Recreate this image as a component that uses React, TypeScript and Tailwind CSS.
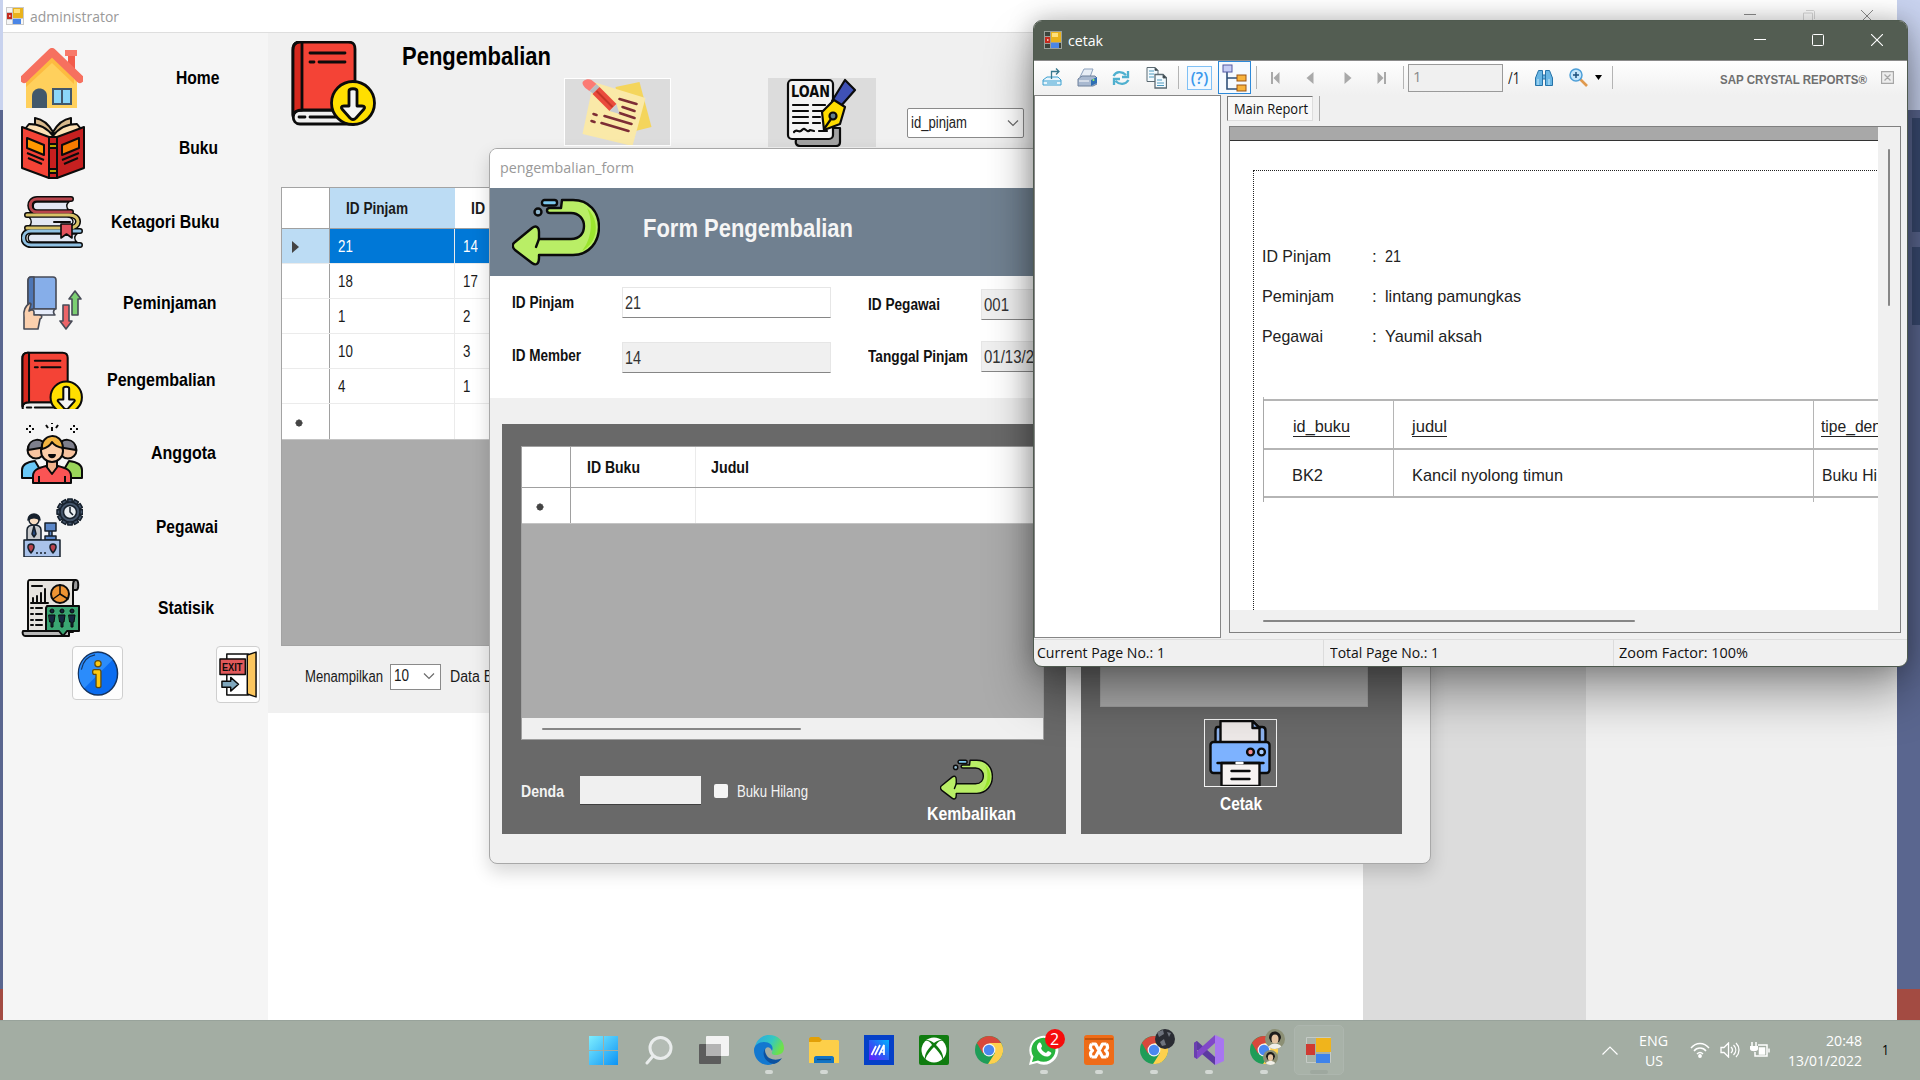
import React, { useLayoutEffect, useRef } from "react";

/* Single-line text condensed or widened to an exact pixel width. */
function Fit({ w, className = "", children }: { w: number; className?: string; children: React.ReactNode }) {
  const ref = useRef<HTMLSpanElement>(null);
  useLayoutEffect(() => {
    const el = ref.current;
    if (!el) return;
    el.style.transform = "none";
    const natural = el.getBoundingClientRect().width;
    if (natural > 0) el.style.transform = `scaleX(${w / natural})`;
  }, [w, children]);
  return (
    <span className={`block shrink-0 whitespace-nowrap ${className}`} style={{ width: w }}>
      <span ref={ref} className="inline-block origin-left">
        {children}
      </span>
    </span>
  );
}

const K = "#0b0b0b";

function FormsIcon({ className = "", dark = false }: { className?: string; dark?: boolean }) {
  const cell = dark ? "#3c443c" : "#f6f6f6";
  return (
    <svg viewBox="0 0 18 18" className={className}>
      <rect width="18" height="18" fill={dark ? "#9aa09a" : "#c9c9c9"} />
      <rect x="1" y="1" width="5" height="4" fill={cell} />
      <rect x="1" y="13" width="5" height="4" fill={cell} />
      <rect x="15" y="12" width="2" height="5" fill={cell} />
      <rect x="1" y="6" width="5" height="6" fill="#c42a1e" />
      <rect x="3" y="8" width="1.500" height="2" fill="#f6b5ae" />
      <rect x="7" y="1" width="10" height="10" fill="#e9b21c" />
      <rect x="8" y="2" width="6" height="4" fill="#ffe07a" />
      <rect x="7" y="12" width="8" height="5" fill="#4b86e6" />
    </svg>
  );
}

function HomeIcon() {
  return (
    <svg viewBox="0 0 62 60" className="h-[60px] w-[62px]">
      <path d="M44 2h12v6h-2v14h-7V8h-3z" fill="#f25c4c" />
      <path d="M44 2h12v6H44z" fill="#f8796a" />
      <path d="M5 31 31 6l25 25v29H5z" fill="#ffd05c" />
      <path d="M9 31 31 9l22 22v5L31 15 5 39v-8z" fill="#fdbb40" />
      <path d="M3 31 31 4l28 27" fill="none" stroke="#f6705f" strokeWidth="8" strokeLinecap="round" strokeLinejoin="round" />
      <path d="M11 60V48c0-10 15-10 15 0v12z" fill="#42586b" />
      <rect x="31" y="40" width="20" height="17" fill="#42586b" />
      <rect x="33" y="42" width="7" height="13" fill="#8bd6f8" />
      <rect x="42" y="42" width="7" height="13" fill="#8bd6f8" />
    </svg>
  );
}

function OpenBookIcon() {
  return (
    <svg viewBox="0 0 64 62" className="h-[62px] w-[64px]" stroke={K} strokeWidth="2" strokeLinejoin="round">
      <path d="M32 15C27 6 20 2 14 1v8L32 17 50 9V1c-6 1-13 5-18 14z" fill="#d8b98c" />
      <path d="M32 19C24 8 13 7 8 7L4 12l28 11 28-11-4-5c-5 0-16 1-24 12z" fill="#fde0b4" />
      <path d="M1 10l27 10v41L1 51z" fill="#f44336" />
      <path d="M63 10 36 20v41l27-10z" fill="#c62020" />
      <path d="M28 20h8v41h-8z" fill="#c81f1f" />
      <path d="M28 27h8v4h-8zM28 52h8v4h-8z" fill="#b8a400" />
      <path d="M6 21l17 7v10L6 31z" fill="#ff9800" />
      <path d="M58 21l-17 7v10l17-7z" fill="#f57c00" />
      <path d="M6 36l17 7M7 41l14 6M58 36l-17 7M57 41l-14 6" fill="none" />
    </svg>
  );
}

function BooksIcon() {
  return (
    <svg viewBox="0 0 62 52" className="h-[52px] w-[62px]" strokeLinecap="round" strokeLinejoin="round">
      <g stroke={K} strokeWidth="6" fill="none">
        <path d="M50 3H16c-9 0-9 13 0 13h34" />
        <path d="M6 19h42c12 0 12 13 0 13H6" />
        <path d="M59 35H10c-10 0-10 14 0 14h49" />
      </g>
      <path d="M16 6h32c-3 2-3 6 0 8H16c-5 0-5-8 0-8zM8 21h38c8 0 8 9 0 9H8c3-2 3-6 0-9zM11 38h45c-3 2-3 6 0 8H11c-5 0-5-8 0-8z" fill="#e2e7f3" stroke={K} strokeWidth="1.400" />
      <g strokeWidth="3" fill="none">
        <path d="M50 3H16c-9 0-9 13 0 13h34" stroke="#b8454c" />
        <path d="M6 19h42c12 0 12 13 0 13H6" stroke="#d8c268" />
        <path d="M59 35H10c-10 0-10 14 0 14h49" stroke="#8fc0e2" />
      </g>
      <path d="M33 26h16" stroke={K} strokeWidth="2" />
      <path d="M40 28h11v14l-5.500-4-5.500 4z" fill="#e2535e" stroke={K} strokeWidth="1.600" />
    </svg>
  );
}

function BorrowIcon() {
  return (
    <svg viewBox="0 0 62 54" className="h-[54px] w-[62px]" stroke="#474b57" strokeWidth="1.600" strokeLinejoin="round">
      <path d="M10 1h22c2 0 3 1 3 3v29H9l-2 4V5c0-3 1-4 3-4z" fill="#86aee9" />
      <path d="M10 1c-2 0-3 2-3 4v31l6-3V1z" fill="#4d76b5" />
      <path d="M34 33H12c-5 0-5 6 0 6h22c-2-2-2-4 0-6z" fill="#e6ecfa" />
      <path d="M3 53V41c-1-7 1-11 6-14l1 1-2 7c3-2 5-1 5 1v3h5c4 0 3 3 1 4l-2 10z" fill="#fbd0ae" />
      <path d="M54 15l6 8h-3v16h-6V23h-3z" fill="#7ccf72" />
      <path d="M45 53l-6-8h3V29h6v16h3z" fill="#ec6468" />
    </svg>
  );
}

function ReturnBookIcon({ className = "" }: { className?: string }) {
  return (
    <svg viewBox="0 0 85 85" className={className} stroke={K} strokeWidth="2.800" strokeLinejoin="round" strokeLinecap="round">
      <path d="M9 69h54v14H9c-9 0-9-14 0-14z" fill="#f0f0f0" />
      <path d="M9 1h48c5 0 7 2 7 7v61H9c-4 0-6 2-7 5V9c0-5 2-8 7-8z" fill="#f44336" />
      <path d="M9 1c-5 0-7 3-7 8v66c1-4 4-6 9-6V1z" fill="#d5281e" />
      <path d="M19 12h35M28 21h26M19 21h4M8 76h6M19 76h26" fill="none" />
      <circle cx="62" cy="62" r="21.500" fill="#ffdf00" />
      <path d="M58 50c0-3 8-3 8 0v15h5c3 0 3 2 2 3l-8 9c-2 2-4 2-6 0l-8-9c-1-1-1-3 2-3h5z" fill="#f4f4f4" />
    </svg>
  );
}

function MembersIcon() {
  return (
    <svg viewBox="0 0 62 62" className="h-[62px] w-[62px]" stroke={K} strokeWidth="2" strokeLinejoin="round">
      <path d="M5 7h2M11 7h2M9 3v2M9 9v2M25 3l2 3M31 1v1M31 5v4M37 3l-2 3M49 7h2M55 7h2M53 3v2M53 9v2" />
      <path d="M1 56V48c0-6 5-8 13-9l10 17z" fill="#69c8f7" />
      <path d="M61 56V48c0-6-5-8-13-9L38 56z" fill="#9bd65a" />
      <circle cx="15" cy="28" r="8.500" fill="#f9c4a0" />
      <circle cx="47" cy="28" r="8.500" fill="#f9c4a0" />
      <path d="M7 28c0-13 16-13 18-3zM55 28c0-13-16-13-18-3z" fill="#7e7f8c" />
      <path d="M26 38h10v10l-5 4-5-4z" fill="#f3b48c" />
      <circle cx="31" cy="29" r="11" fill="#fdcda7" />
      <path d="M21 27c-2-15 20-19 21-1-6-1-9-3-11-6-2 4-6 6-10 7z" fill="#f3b440" />
      <path d="M28 33c1 3 5 3 6 0z" fill={K} />
      <path d="M12 61V54c0-6 5-8 13-10l6 8 6-8c8 2 13 4 13 10v7z" fill="#fb5454" />
      <path d="M18 54v7M44 54v7" />
    </svg>
  );
}

function StaffIcon() {
  const teeth = Array.from({ length: 12 }, (_, i) => i * 30);
  return (
    <svg viewBox="0 0 62 59" className="h-[59px] w-[62px]" stroke="#16202c" strokeWidth="1.500" strokeLinejoin="round">
      {teeth.map((a) => (
        <rect key={a} x="46.800" y="1" width="4.400" height="5" fill="#44546a" transform={`rotate(${a} 49 14)`} />
      ))}
      <circle cx="49" cy="14" r="10" fill="#44546a" />
      <circle cx="49" cy="14" r="6.500" fill="#e8ecf0" />
      <path d="M49 9v5l3 3" fill="none" />
      <path d="M6 42V32c0-4 3-5 7-5s7 1 7 5v10z" fill="#c9cacc" />
      <circle cx="13" cy="22" r="5" fill="#f8dcc0" />
      <path d="M7 22c0-8 12-8 12 0-4-3-8-3-12 0z" fill="#16202c" />
      <path d="M13 28l2 8-2 3-2-3z" fill="#274a80" />
      <path d="M24 25h11v8H24zM28 33h3v5h-3zM24 38h11v4H24z" fill="#5b87c8" />
      <path d="M3 42h36v17H3z" fill="#a9c2ea" />
      <path d="M10 55c-5-6-3-9 0-9s5 3 0 9zM32 55c-5-6-3-9 0-9s5 3 0 9z" fill="#b6424c" />
      <path d="M15 55h12" strokeDasharray="2 2" />
    </svg>
  );
}

function StatsIcon() {
  return (
    <svg viewBox="0 0 62 58" className="h-[58px] w-[62px]" stroke={K} strokeWidth="2" strokeLinejoin="round" strokeLinecap="round">
      <path d="M52 1h3c3 0 3 10 0 10h-4z" fill="#9a9a9a" />
      <path d="M9 1h45c-2 1-2 3-2 6v46H7V4c0-2 0-3 2-3z" fill="#e6e3de" />
      <path d="M2 52h46v5H4c-2 0-3-3-2-5z" fill="#b8b8b8" />
      <path d="M11 7h10M12 24V19M16 24V17M20 24V14M24 24V10M10 24h17" fill="none" />
      <circle cx="39" cy="15" r="9" fill="#ee9433" />
      <path d="M39 6v9l-7 5M39 15l8 5" fill="none" strokeWidth="1.500" />
      <path d="M10 29h2M15 29h6M10 35h2M15 35h6M10 41h2M15 41h6M10 46h2M15 46h6" />
      <path d="M26 27h32v25H46l-4 5-4-5H25V29z" fill="#3aa572" />
      <g fill="#15263f" strokeWidth="1">
        {[31, 41, 51].map((x) => (
          <path key={x} d={`M${x - 2} 32a2 2 0 1 1 4 0a2 2 0 0 1-4 0M${x - 3} 36h6l-1 7h-1v5h-2v-5h-1z`} />
        ))}
      </g>
    </svg>
  );
}

function InfoIcon() {
  return (
    <svg viewBox="0 0 42 46" className="h-[45px] w-[42px]">
      <ellipse cx="21" cy="23" rx="20" ry="22" fill="#0a6cf0" stroke="#16345e" strokeWidth="1.500" />
      <path d="M7 38C-4 26 2 3 20 2c7 0 12 3 16 7z" fill="#2b8cfb" />
      <path d="M4 19C6 9 12 5 18 4" stroke="#16345e" fill="none" strokeWidth="1.200" />
      <g fill="#fdc90f" stroke="#5d4a10" strokeWidth="1.300" strokeLinejoin="round">
        <circle cx="21" cy="13" r="3.200" />
        <path d="M17 19h5c1 0 2 1 2 2v15c0 2-5 2-5 0V24h-2c-2 0-2-5 0-5z" />
      </g>
    </svg>
  );
}

function ExitIcon() {
  return (
    <svg viewBox="0 0 40 50" className="h-[49px] w-[39px]" stroke={K} strokeWidth="1.500" strokeLinejoin="round">
      <path d="M8 4h22v42H8z" fill="#fff" />
      <path d="M29 5l9-3v46l-9-3z" fill="#fbc65e" />
      <path d="M1 9h26v16H1z" fill="#e0585a" />
      <text x="3" y="21.500" fontFamily="Liberation Sans, sans-serif" fontWeight="bold" fontSize="12" textLength="21" lengthAdjust="spacingAndGlyphs" fill={K} stroke="none">EXIT</text>
      <path d="M3 32h9v-4l8 7-8 7v-4H3z" fill="#7fa7bd" />
    </svg>
  );
}

function NoteIcon() {
  return (
    <svg viewBox="0 0 104 66" className="h-full w-full">
      <path d="M50 8l24-5 12 45-28 7z" fill="#f4d55c" />
      <path d="M28 3l52 16-13 48-50-12z" fill="#fae9a8" />
      <path d="M54 20l17 5M57 28l12 4M54 34l15 5M39 37l27 8M36 44l27 8M28 35l3 1M26 42l3 1" stroke="#7d2d35" strokeWidth="2.600" strokeLinecap="round" />
      <path d="M17 4c0-3 6-5 9-3l5 4-7 7c-3-2-7-5-7-8z" fill="#fb7a74" />
      <path d="M31 5l-7 7 4 3 6-7z" fill="#b9bcc2" />
      <path d="M34 8l-7 7 17 17 7-7z" fill="#ea4b3c" />
      <path d="M31 12l16 16" stroke="#c43528" strokeWidth="2" />
      <path d="M51 25l-7 7 10 3z" fill="#c9ccd2" />
    </svg>
  );
}

function LoanIcon() {
  return (
    <svg viewBox="0 0 108 69" className="h-full w-full" stroke={K} strokeWidth="2.200" strokeLinejoin="round" strokeLinecap="round">
      <path d="M28 50h44v14c0 3-2 4-4 4H32c-3 0-5-2-4-6z" fill="#a2a2a2" />
      <rect x="20" y="2" width="45" height="59" rx="4" fill="#f4f4f4" />
      <text x="23" y="19" fontFamily="DejaVu Sans, sans-serif" fontWeight="bold" fontSize="15" textLength="39" lengthAdjust="spacingAndGlyphs" fill={K} stroke="none">LOAN</text>
      <path d="M25 27h15M45 27h12M25 33h15M45 33h10M25 39h15M45 39h7M25 45h15M45 45h7M26 54c3-4 5 2 8-2s5 4 8 0l4 1M51 53h8" fill="none" />
      <path d="M77 2l10 10-15 17-8-6z" fill="#3f51b5" />
      <path d="M66 22l11 7-5 17-16 6-2-18z" fill="#ffdd00" />
      <circle cx="65" cy="38" r="3.500" fill="#607d8b" />
      <path d="M63 41l-7 10" fill="none" />
    </svg>
  );
}

function ReturnArrow({ className = "" }: { className?: string }) {
  return (
    <svg viewBox="0 0 88 68" className={className} stroke={K} strokeWidth="2.400" strokeLinejoin="round" strokeLinecap="round">
      <path d="M50 2h11c16 0 26 12 26 27S77 57 61 57H27v3c0 6-3 8-7 5L3 52c-3-3-3-6 0-8l17-14c4-3 7-1 7 4v7h32c9 0 13-6 13-13s-5-13-13-13H38c-4 0-4-5 0-5h11z" fill="#b9ee66" />
      <path d="M75 10c13 12 12 34-5 43 9-11 12-29 5-43z" fill="#9be52e" stroke="none" />
      <path d="M27 41l-3 8" fill="none" />
      <rect x="30" y="2" width="15" height="5.500" rx="2.500" fill="#7cc8ee" />
      <circle cx="26" cy="14" r="3.500" fill="#8fb6cc" />
    </svg>
  );
}

function PrinterIcon() {
  return (
    <svg viewBox="0 0 70 66" className="h-full w-full" stroke={K} strokeWidth="2.400" strokeLinejoin="round" strokeLinecap="round">
      <path d="M13 7h-1c-2 0-2 2-2 4v12h50V11c0-2 0-4-3-4z" fill="#8cb2ee" />
      <path d="M15 1h32l7 7v15H15z" fill="#eee9e8" />
      <path d="M47 1v7h7z" fill="#8cb2ee" />
      <rect x="5" y="22" width="59" height="31" rx="3" fill="#7db2ff" />
      <path d="M16 43h38v23H16z" fill="#f6f2f1" />
      <path d="M12 43h46M26 51h18M26 59h18" fill="none" />
      <circle cx="45" cy="32" r="3.400" fill="#f28b93" />
      <circle cx="56" cy="32" r="3.400" fill="#a6ccff" />
      <path d="M31 43h6" stroke="#fff" />
    </svg>
  );
}

const menu: { label: string; w: number; x: number; gap: string; icon: React.ReactNode }[] = [
  { label: "Home", w: 43.5, x: 176, gap: "mt-[14px]", icon: <HomeIcon /> },
  { label: "Buku", w: 39, x: 178.5, gap: "mt-[8px]", icon: <OpenBookIcon /> },
  { label: "Ketagori Buku", w: 108.5, x: 110.5, gap: "mt-[12px]", icon: <BooksIcon /> },
  { label: "Peminjaman", w: 93.5, x: 123, gap: "mt-[19px]", icon: <BorrowIcon /> },
  { label: "Pengembalian", w: 108.5, x: 106.5, gap: "mt-[15px]", icon: (
    <span className="block h-[58px] w-[62px] overflow-hidden"><ReturnBookIcon className="h-[64px] w-[62px]" /></span>
  ) },
  { label: "Anggota", w: 65, x: 150.5, gap: "mt-[11px]", icon: <MembersIcon /> },
  { label: "Pegawai", w: 62, x: 155.5, gap: "mt-[12px]", icon: <StaffIcon /> },
  { label: "Statisik", w: 56, x: 158, gap: "mt-[19px]", icon: <StatsIcon /> },
];

function Sidebar() {
  return (
    <nav className="flex w-[265px] shrink-0 flex-col bg-[#f5f5f5]">
      {menu.map((m) => (
        <div key={m.label} className={`flex h-[62px] shrink-0 items-center pl-[18px] ${m.gap}`}>
          <div className="flex shrink-0 items-center" style={{ width: m.x - 21 }}>{m.icon}</div>
          <Fit w={m.w} className="text-[18.5px] leading-[24px] font-bold text-black">{m.label}</Fit>
        </div>
      ))}
      <div className="mt-[7px] flex items-start pl-[69px]">
        <div className="flex h-[54px] w-[51px] items-center justify-center rounded-[4px] border border-[#cfcfcf] bg-[#fdfdfd]"><InfoIcon /></div>
        <div className="ml-[93px] flex h-[57px] w-[44px] items-center justify-center rounded-[4px] border border-[#cfcfcf] bg-[#fdfdfd]"><ExitIcon /></div>
      </div>
    </nav>
  );
}

function Chevron() {
  return (
    <svg viewBox="0 0 12 8" className="h-[8px] w-[12px]"><path d="M1 1.500l5 5 5-5" fill="none" stroke="#6b6b6b" strokeWidth="1.200" /></svg>
  );
}

const loans = [["21", "14"], ["18", "17"], ["1", "2"], ["10", "3"], ["4", "1"]];
const digitsW = (s: string) => s.length * 7.4;

function LoanTable() {
  return (
    <div className="ml-[13px] flex h-[459px] w-[760px] flex-col border border-[#a3a3a3] bg-[#ababab] text-[16px] leading-[20px] text-[#1a1a1a]">
      <div className="flex h-[41px] shrink-0 border-b border-[#a0a0a0] bg-white font-bold">
        <div className="w-[48px] border-r border-[#a0a0a0]" />
        <div className="flex w-[125px] items-center bg-[#bcdcf4] pt-[2px] pl-[16px]"><Fit w={62}>ID Pinjam</Fit></div>
        <div className="flex items-center pt-[2px] pl-[16px]"><Fit w={72}>ID Member</Fit></div>
      </div>
      {loans.map(([a, b], i) => (
        <div key={a} className={`flex h-[35px] shrink-0 border-b border-[#ebebeb] ${i === 0 ? "bg-[#0078d7] text-white" : "bg-white"}`}>
          <div className={`flex w-[48px] items-center border-r border-[#a0a0a0] pt-px pl-[10px] ${i === 0 ? "bg-[#bcdcf4]" : ""}`}>
            {i === 0 && <svg viewBox="0 0 7 12" className="h-[12px] w-[7px]"><path d="M0 0l7 6-7 6z" fill="#444" /></svg>}
          </div>
          <div className="flex w-[125px] items-center border-r border-[#ebebeb] pt-[2px] pl-[8px]"><Fit w={digitsW(a)}>{a}</Fit></div>
          <div className="flex items-center pt-[2px] pl-[8px]"><Fit w={digitsW(b)}>{b}</Fit></div>
        </div>
      ))}
      <div className="flex h-[36px] shrink-0 border-b border-[#c4c4c4] bg-white">
        <div className="flex w-[48px] items-center border-r border-[#a0a0a0] pt-[2px] pl-[13px]"><Star /></div>
        <div className="w-[125px] border-r border-[#ebebeb]" />
      </div>
    </div>
  );
}

function Star() {
  return (
    <svg viewBox="0 0 8 8" className="h-[8px] w-[8px]"><path d="M4 .5v7M.5 4h7M1.500 1.500l5 5M6.500 1.500l-5 5" stroke="#444" strokeWidth="2" /></svg>
  );
}

function AdminWindow() {
  return (
    <div className="absolute top-0 left-[3px] flex h-[1020px] w-[1894px] flex-col bg-[#f0f0f0]">
      <div className="flex h-[33px] shrink-0 items-center border-b border-[#dedede] bg-white pl-[3px]">
        <FormsIcon className="h-[18px] w-[18px]" />
        <Fit w={89} className="ml-[6px] font-['Open_Sans',sans-serif] text-[15px] leading-[20px] text-[#999]">administrator</Fit>
        <div className="mr-[24px] ml-auto flex w-[129px] shrink-0 items-start justify-between">
          <svg viewBox="0 0 12 12" className="h-[12px] w-[12px]"><path d="M0 4.500h12" stroke="#8c8c8c" /></svg>
          <svg viewBox="0 0 12 12" className="h-[12px] w-[12px]"><path d="M.5 3h9v9h-9zM3 .5h7c1 0 1.500.5 1.500 1.500v7" fill="none" stroke="#d8d8d8" /></svg>
          <svg viewBox="0 0 12 12" className="h-[12px] w-[12px]"><path d="M0 0l12 12M12 0L0 12" stroke="#8c8c8c" /></svg>
        </div>
      </div>
      <div className="flex min-h-0 flex-1">
        <Sidebar />
        <div className="flex w-[1095px] shrink-0 flex-col bg-white">
          <div className="flex h-[680px] shrink-0 flex-col bg-[#f0f0f0]">
            <div className="flex h-[154px] shrink-0 items-start pl-[23px]">
              <ReturnBookIcon className="mt-[8px] h-[85px] w-[85px] shrink-0" />
              <Fit w={149} className="mt-[9px] ml-[26px] text-[25px] leading-[28px] font-bold text-black">Pengembalian</Fit>
              <div className="mt-[45px] ml-[13px] h-[68px] w-[107px] shrink-0 border border-white bg-[#dcdcdc]"><NoteIcon /></div>
              <div className="mt-[45px] ml-[97px] h-[69px] w-[108px] shrink-0 bg-[#dcdcdc]"><LoanIcon /></div>
              <div className="mt-[75px] ml-[31px] flex h-[30px] w-[117px] shrink-0 items-center justify-between rounded-[2px] border border-[#8a8a8a] bg-white pr-[4px] pl-[3px]">
                <Fit w={56} className="text-[16px] leading-[20px] text-[#222]">id_pinjam</Fit>
                <Chevron />
              </div>
            </div>
            <LoanTable />
            <div className="flex h-[62px] items-center pl-[37px] text-[16px] leading-[20px] text-[#1a1a1a]">
              <Fit w={78}>Menampilkan</Fit>
              <div className="ml-[7px] flex h-[26px] w-[51px] items-center justify-between border border-[#8a8a8a] bg-white pr-[5px] pb-[2px] pl-[3px]">
                <Fit w={15}>10</Fit>
                <Chevron />
              </div>
              <Fit w={66} className="ml-[9px]">Data Buku</Fit>
            </div>
          </div>
        </div>
        <div className="w-[223px] shrink-0 bg-[#dcdcdc]" />
      </div>
    </div>
  );
}

function Field({ value, w, className }: { value: string; w: number; className: string }) {
  return (
    <div className={`flex shrink-0 items-center border border-[#e6e6e6] border-b-[#868686] pl-[2px] text-[19px] leading-[22px] text-[#333] ${className}`}>
      <Fit w={w}>{value}</Fit>
    </div>
  );
}

function FormWindow() {
  return (
    <div className="absolute top-[148px] left-[489px] flex h-[716px] w-[942px] flex-col overflow-hidden rounded-[8px] border border-[#a8a8a8] bg-[#f0f0f0] shadow-[0_8px_18px_rgba(0,0,0,0.16)]">
      <div className="flex h-[39px] shrink-0 items-center bg-white pb-[3px] pl-[10px]">
        <Fit w={134} className="font-['Open_Sans',sans-serif] text-[15px] leading-[20px] text-[#999]">pengembalian_form</Fit>
      </div>
      <div className="flex h-[88px] shrink-0 items-center bg-[#708090] pl-[22px]">
        <ReturnArrow className="h-[68px] w-[88px]" />
        <Fit w={210} className="mb-[8px] ml-[43px] text-[25px] leading-[28px] font-bold text-[#f5f5f5]">Form Pengembalian</Fit>
      </div>
      <div className="flex h-[122px] shrink-0 bg-white pl-[22px] text-[16px] leading-[20px] font-bold text-[#111]">
        <div className="flex flex-col gap-[24px] pt-[11px]">
          <div className="flex items-center">
            <Fit w={62} className="mr-[48px]">ID Pinjam</Fit>
            <Field value="21" w={16} className="h-[31px] w-[209px] bg-white font-normal" />
          </div>
          <div className="flex items-center">
            <Fit w={69} className="mr-[41px] mb-[4px]">ID Member</Fit>
            <Field value="14" w={16} className="h-[31px] w-[209px] bg-[#f0f0f0] font-normal" />
          </div>
        </div>
        <div className="ml-[37px] flex flex-col gap-[21px] pt-[13px]">
          <div className="flex items-center">
            <Fit w={72} className="mr-[41px]">ID Pegawai</Fit>
            <Field value="001" w={25} className="h-[31px] w-[209px] bg-[#f0f0f0] font-normal" />
          </div>
          <div className="flex items-center">
            <Fit w={100} className="mr-[13px]">Tanggal Pinjam</Fit>
            <Field value="01/13/2022" w={75} className="h-[31px] w-[209px] bg-[#f0f0f0] font-normal" />
          </div>
        </div>
      </div>
      <div className="flex flex-1 items-start pt-[26px] pl-[12px]">
        <div className="flex h-[410px] w-[564px] shrink-0 flex-col bg-[#696969] pt-[22px] pl-[19px]">
          <div className="flex h-[294px] w-[523px] shrink-0 flex-col border border-[#a0a0a0] bg-[#ababab] text-[16px] leading-[20px]">
            <div className="flex h-[41px] shrink-0 border-b border-[#a0a0a0] bg-white font-bold text-[#111]">
              <div className="w-[49px] border-r border-[#a0a0a0]" />
              <div className="flex w-[125px] items-center border-r border-[#ebebeb] pt-[2px] pl-[16px]"><Fit w={53}>ID Buku</Fit></div>
              <div className="flex items-center pt-[2px] pl-[15px]"><Fit w={38}>Judul</Fit></div>
            </div>
            <div className="flex h-[36px] shrink-0 border-b border-[#c4c4c4] bg-white">
              <div className="flex w-[49px] items-center border-r border-[#a0a0a0] pt-[2px] pl-[14px]"><Star /></div>
              <div className="w-[125px] border-r border-[#ebebeb]" />
            </div>
            <div className="mt-auto flex h-[21px] items-center bg-[#f0f0f0] pl-[20px]">
              <div className="h-[2px] w-[259px] rounded bg-[#868686]" />
            </div>
          </div>
          <div className="flex items-start text-[16px] leading-[20px] text-[#f3f3f3]">
            <div className="mt-[36px] flex h-[29px] items-center">
              <Fit w={43} className="pt-[2px] font-bold">Denda</Fit>
              <div className="ml-[16px] h-[29px] w-[121px] border-b border-[#404040] bg-[#f0f0f0]" />
              <div className="ml-[13px] h-[14px] w-[14px] rounded-[2px] bg-[#f5f5f5]" />
              <Fit w={71} className="ml-[9px] pt-[2px]">Buku Hilang</Fit>
            </div>
            <div className="mt-[19px] ml-[119px] flex flex-col">
              <ReturnArrow className="ml-[13px] h-[41px] w-[53px]" />
              <Fit w={89} className="mt-[4px] text-[18.5px] font-bold text-white">Kembalikan</Fit>
            </div>
          </div>
        </div>
        <div className="ml-[15px] flex h-[410px] w-[321px] shrink-0 flex-col bg-[#696969] pt-[22px]">
          <div className="ml-[19px] h-[261px] w-[268px] shrink-0 border border-[#a0a0a0] bg-[#ababab]" />
          <div className="mt-[12px] ml-[123px] h-[68px] w-[73px] shrink-0 border border-[#f3f3f3]"><PrinterIcon /></div>
          <Fit w={42} className="mt-[7px] ml-[139px] text-[18.5px] leading-[20px] font-bold text-white">Cetak</Fit>
        </div>
      </div>
    </div>
  );
}

const Sep = ({ className }: { className: string }) => <div className={`h-[23px] w-px shrink-0 bg-[#b4b4b4] ${className}`} />;

function ReportToolbar() {
  return (
    <div className="flex h-[35px] shrink-0 items-center border-t border-[#8b8b8b] bg-gradient-to-b from-white to-[#f0f0f0] pb-px">
      <svg viewBox="0 0 20 19" className="ml-[8px] h-[19px] w-[20px] shrink-0">
        <path d="M1 12l4-3h11l3 3v5H1z" fill="#e7f5fc" stroke="#3b9fd0" />
        <path d="M1 13h18M5 15h10" stroke="#3b9fd0" />
        <path d="M9.500 11V3.500H17M14 .5l3 3-3 3" fill="none" stroke="#38788e" strokeWidth="1.300" />
      </svg>
      <svg viewBox="0 0 20 20" className="ml-[15px] h-[20px] w-[20px] shrink-0">
        <path d="M7 1h9l-3 8H3z" fill="#e8eef6" stroke="#8ba0bc" />
        <path d="M1 11l4-3h13l2 2v6l-4 2H1z" fill="#a9b9d0" stroke="#6e819c" />
        <path d="M14 12l6-3v6l-6 3z" fill="#2e6fb5" />
        <path d="M2 13h10" stroke="#fff" /><circle cx="16.500" cy="12" r="1" fill="#9cff57" />
      </svg>
      <svg viewBox="0 0 18 16" className="ml-[15px] h-[16px] w-[18px] shrink-0" fill="none" stroke="#4fb0cf" strokeWidth="2.300">
        <path d="M1.500 6C4 1 10 1 14 5M16 1v6h-6M16.500 10c-3 5-9 5-13 1M2 15V9h6" />
      </svg>
      <svg viewBox="0 0 21 22" className="ml-[16px] h-[22px] w-[21px] shrink-0" stroke="#5b6a72" fill="#f3fafe">
        <path d="M1 .5h8l3 3v11H1z" /><path d="M9 7.500h8l3.500 3.500v10H9z" strokeWidth="1.300" />
        <path d="M3 4h5M3 7h5M3 10h5M11 13h5M11 16h7M11 18.500h7" stroke="#4e9bc0" />
        <path d="M9 .5v3h3zM17 7.500V11h3.500z" fill="#222" />
      </svg>
      <Sep className="ml-[11px]" />
      <div className="ml-[8px] flex h-[24px] w-[25px] shrink-0 items-center justify-center border border-[#7fc0f5] bg-[#f2f9ff] font-['Open_Sans',sans-serif] text-[16px] leading-none font-semibold text-[#3a98ec]">(?)</div>
      <div className="ml-[6px] h-[33px] w-[33px] shrink-0 border border-[#2d89d8] bg-[#f6fafe]">
        <svg viewBox="-1 -1 31 31" className="h-full w-full">
          <path d="M7 9v17h10M7 15h10" fill="none" stroke="#2e4f78" strokeWidth="1.600" />
          <rect x="3" y="2" width="9" height="7" fill="#c6cdf5" stroke="#5359a0" />
          <rect x="17" y="12" width="9" height="6" fill="#f8b33c" stroke="#9a5414" />
          <rect x="17" y="22" width="9" height="6" fill="#f8b33c" stroke="#9a5414" />
        </svg>
      </div>
      <Sep className="ml-[5px]" />
      <svg viewBox="0 0 9 12" className="ml-[14px] h-[12px] w-[9px] shrink-0" fill="#a9a9a9"><path d="M0 0h2v12H0zM8.500 0v12L2.500 6z" /></svg>
      <svg viewBox="0 0 7 12" className="ml-[26px] h-[12px] w-[8px] shrink-0" fill="#a9a9a9"><path d="M7 0v12L0 6z" /></svg>
      <svg viewBox="0 0 7 12" className="ml-[30px] h-[12px] w-[8px] shrink-0" fill="#a9a9a9"><path d="M0 0v12l7-6z" /></svg>
      <svg viewBox="0 0 9 12" className="ml-[25px] h-[12px] w-[9px] shrink-0" fill="#a9a9a9"><path d="M7 0h2v12H7zM.5 0v12l6-6z" /></svg>
      <Sep className="ml-[17px]" />
      <div className="ml-[4px] flex h-[28px] w-[95px] shrink-0 items-center border border-[#9a9a9a] bg-[#f0f0f0] pb-[3px] pl-[4px] font-['Open_Sans',sans-serif] text-[15px] leading-[18px] text-[#8a8a8a]">1</div>
      <Fit w={12} className="ml-[5px] font-['Open_Sans',sans-serif] text-[16px] leading-[20px] text-[#222]">/1</Fit>
      <svg viewBox="0 0 18 16" className="ml-[15px] h-[16px] w-[18px] shrink-0" fill="#69b6e4" stroke="#2673a8">
        <path d="M3.500.5h4v15h-7V8zM14.500.5h-4v15h7V8z" /><path d="M7.500 5h3v4h-3z" /><path d="M3 9v6M14 9v6" stroke="#c8e8fa" />
      </svg>
      <svg viewBox="0 0 19 19" className="ml-[16px] h-[19px] w-[19px] shrink-0">
        <path d="M11 11l7 7" stroke="#e0994d" strokeWidth="2.600" />
        <circle cx="7" cy="7" r="6" fill="#c5e6fb" stroke="#4d9fd8" strokeWidth="1.500" />
        <path d="M4 7h6M7 4v6" stroke="#1d4f7c" strokeWidth="1.500" />
      </svg>
      <svg viewBox="0 0 7 5" className="ml-[7px] h-[5px] w-[7px] shrink-0"><path d="M0 0h7L3.500 5z" fill="#000" /></svg>
      <Sep className="ml-[10px]" />
      <Fit w={147} className="mt-[5px] ml-[107px] text-[13px] leading-[16px] font-bold text-[#6f6f6f]">SAP CRYSTAL REPORTS®</Fit>
      <svg viewBox="0 0 13 13" className="ml-[14px] h-[13px] w-[13px] shrink-0"><path d="M.5.5h12v12H.5zM3.500 3.500l6 6M9.500 3.500l-6 6" fill="#ededed" stroke="#a6a6a6" strokeWidth="1.300" /></svg>
    </div>
  );
}

const info: [string, number, string, number][] = [
  ["ID Pinjam", 69, "21", 16],
  ["Peminjam", 72, "lintang pamungkas", 136],
  ["Pegawai", 61, "Yaumil aksah", 97],
];

function ReportPage() {
  return (
    <div className="h-[469px] overflow-hidden bg-white pt-[29px] pl-[23px]">
      <div className="h-[500px] w-[760px] border border-dotted border-[#222] pt-[66px] text-[17px] leading-[20px] text-[#222]">
        {info.map(([k, kw, v, vw]) => (
          <div key={k} className="flex h-[40px] items-center pl-[8px]">
            <Fit w={kw}>{k}</Fit>
            <span className="shrink-0" style={{ width: 110 - kw }} />
            <span className="w-[13px] shrink-0">:</span>
            <Fit w={vw}>{v}</Fit>
          </div>
        ))}
        <div className="mt-[40px] ml-[9px] h-[2px] w-[730px] border-x border-[#b5b5b5]" />
        <div className="ml-[9px] w-[730px] border-l border-[#a8a8a8]">
          <div className="flex h-[49px] border-t-2 border-[#b5b5b5]">
            <div className="flex w-[130px] shrink-0 items-center border-r border-[#b5b5b5] pt-[5px] pl-[29px]"><span className="border-b border-[#222]"><Fit w={57} className="h-[19px]">id_buku</Fit></span></div>
            <div className="flex w-[420px] shrink-0 items-center border-r border-[#b5b5b5] pt-[5px] pl-[18px]"><span className="border-b border-[#222]"><Fit w={35} className="h-[19px]">judul</Fit></span></div>
            <div className="flex shrink-0 items-center pt-[5px] pl-[7px]"><span className="border-b border-[#222]"><Fit w={60} className="h-[19px]">tipe_den</Fit></span></div>
          </div>
          <div className="flex h-[50px] border-y-2 border-[#b5b5b5]">
            <div className="flex w-[130px] shrink-0 items-center border-r border-[#b5b5b5] pt-[5px] pl-[28px]"><Fit w={31}>BK2</Fit></div>
            <div className="flex w-[420px] shrink-0 items-center border-r border-[#b5b5b5] pt-[5px] pl-[18px]"><Fit w={151}>Kancil nyolong timun</Fit></div>
            <div className="flex shrink-0 items-center pt-[5px] pl-[8px]"><Fit w={55}>Buku Hi</Fit></div>
          </div>
          <div className="h-[4px] w-[550px] border-r border-[#b5b5b5]" />
        </div>
      </div>
    </div>
  );
}

function ReportWindow() {
  return (
    <div className="absolute top-[20px] left-[1033px] flex h-[647px] w-[875px] flex-col overflow-hidden rounded-[9px] border border-[#4f5a4f] bg-[#f0f0f0] shadow-[0_28px_48px_rgba(0,0,0,0.36),0_0_26px_rgba(0,0,0,0.26)]">
      <div className="flex h-[39px] shrink-0 items-center bg-[#535d52] pb-[2px] pl-[10px]">
        <FormsIcon className="h-[18px] w-[18px]" dark />
        <Fit w={35} className="ml-[6px] font-['Open_Sans',sans-serif] text-[15px] leading-[20px] text-white">cetak</Fit>
        <svg viewBox="0 0 12 12" className="mt-px mr-[46px] ml-auto h-[12px] w-[12px]"><path d="M0 5.500h12" stroke="#fff" /></svg>
        <svg viewBox="0 0 12 12" className="mt-px mr-[47px] h-[12px] w-[12px]"><rect x=".5" y=".5" width="11" height="11" rx="1" fill="none" stroke="#fff" /></svg>
        <svg viewBox="0 0 12 12" className="mt-px mr-[24px] h-[12px] w-[12px]"><path d="M0 0l12 12M12 0L0 12" stroke="#fff" strokeWidth="1.100" /></svg>
      </div>
      <ReportToolbar />
      <div className="flex h-[544px] shrink-0">
        <div className="h-[543px] w-[187px] shrink-0 border border-[#868686] bg-white" />
        <div className="flex flex-col pl-[6px]">
          <div className="flex h-[31px] items-start pt-px">
            <div className="flex h-[25px] w-[86px] items-center border border-t-[#777] border-r-[#ddd] border-b-[#ddd] border-l-[#777] bg-[#f8f8f8] pl-[6px]">
              <Fit w={74} className="font-['Open_Sans',sans-serif] text-[14.5px] leading-[18px] text-[#111]">Main Report</Fit>
            </div>
            <div className="ml-[6px] h-[25px] w-px bg-[#aaa]" />
          </div>
          <div className="ml-[2px] flex h-[507px] w-[672px] border border-[#808080]">
            <div className="flex w-[648px] shrink-0 flex-col">
              <div className="h-[14px] shrink-0 border-b border-[#333] bg-[#a8a8a8]" />
              <ReportPage />
              <div className="flex flex-1 items-center pb-px pl-[33px]"><div className="h-[2px] w-[372px] rounded bg-[#868686]" /></div>
            </div>
            <div className="pt-[22px] pl-[10px]"><div className="h-[157px] w-[2px] rounded bg-[#868686]" /></div>
          </div>
        </div>
      </div>
      <div className="flex flex-1 items-center border-t border-[#dcdcdc] pl-[3px] font-['Open_Sans',sans-serif] text-[15px] leading-[18px] text-[#111]">
        <Fit w={128} className="pb-[2px]">Current Page No.: 1</Fit>
        <div className="ml-[158px] h-full w-px bg-[#dcdcdc]" />
        <Fit w={109} className="ml-[6px] pb-[2px]">Total Page No.: 1</Fit>
        <div className="ml-[174px] h-full w-px bg-[#dcdcdc]" />
        <Fit w={129} className="ml-[5px] pb-[2px]">Zoom Factor: 100%</Fit>
      </div>
    </div>
  );
}

function Chrome() {
  return (
    <svg viewBox="0 0 28 28" className="h-[28px] w-[28px]">
      <circle cx="14" cy="14" r="14" fill="#1f9d58" />
      <path d="M14 14L1.900 7A14 14 0 0 1 26.100 7z" fill="#d8483b" />
      <path d="M14 7h12.100A14 14 0 0 1 13 28l7-11z" fill="#fdd04e" />
      <path d="M1.900 7l6 10.500L14 7z" fill="#d8483b" />
      <circle cx="14" cy="14" r="6.400" fill="#f4f4f4" />
      <circle cx="14" cy="14" r="5.200" fill="#4a87f0" />
    </svg>
  );
}

function Avatar({ className, kind }: { className: string; kind: "dark" | "face" }) {
  return (
    <svg viewBox="0 0 20 20" className={`absolute rounded-full ${className}`}>
      <rect width="20" height="20" fill={kind === "dark" ? "#2a2c33" : "#8b8f74"} />
      {kind === "dark" ? (
        <path d="M2 3l6-2 1 4-5 3zM12 3l4 1-2 4zM5 13l4-3 2 6-4 1z" fill="#6d727c" />
      ) : (
        <>
          <path d="M4 9c0-9 12-8 12 0l-2 4H6z" fill="#1d1c1a" />
          <ellipse cx="10" cy="10" rx="3.500" ry="4.500" fill="#e5c3a0" />
          <path d="M3 20c0-7 14-7 14 0z" fill="#f0efe8" />
        </>
      )}
    </svg>
  );
}

const apps: { icon: React.ReactNode; open?: boolean; active?: boolean }[] = [
  { icon: (
    <svg viewBox="0 0 29 29" className="h-[29px] w-[29px]">
      <defs><linearGradient id="win" x1="0" y1="0" x2="1" y2="1"><stop stopColor="#7eeeff" /><stop offset="1" stopColor="#0c93f5" /></linearGradient></defs>
      <path d="M0 0h14v14H0zM15 0h14v14H15zM0 15h14v14H0zM15 15h14v14H15z" fill="url(#win)" />
    </svg>
  ) },
  { icon: (
    <svg viewBox="0 0 28 29" className="h-[29px] w-[28px]" fill="none" stroke="#e9ecec" strokeWidth="3"><circle cx="15.500" cy="12" r="10.500" fill="#b4bcb5" /><path d="M8 20l-6 7" strokeLinecap="round" /></svg>
  ) },
  { icon: (
    <svg viewBox="0 0 30 28" className="h-[28px] w-[30px]"><rect y="8" width="22" height="20" rx="1" fill="#5d5d5d" /><rect x="7" width="23" height="20" rx="1" fill="#f3f3f3" /><path d="M7 8h15v12H7z" fill="#b4b4b4" /></svg>
  ) },
  { open: true, icon: (
    <svg viewBox="0 0 30 30" className="h-[30px] w-[30px]">
      <defs>
        <linearGradient id="eg" x1="0" y1="0" x2="1" y2=".4"><stop stopColor="#2aa6e6" /><stop offset=".6" stopColor="#34c8c0" /><stop offset="1" stopColor="#6fe04c" /></linearGradient>
      </defs>
      <path d="M1 12C2 5 8 0 15 0c9 0 15 6 15 13 0 5-4 7-8 7-3 0-5-1-4-3 2-4-1-8-6-8-5-1-9 1-11 3z" fill="url(#eg)" />
      <path d="M0 15c0-5 5-8 10-8 7 0 10 5 8 9-1-3-4-5-6-3-4 5 2 13 9 14-2 2-4 3-7 3C6 30 0 23 0 15z" fill="#1378d0" />
      <path d="M11 14c-4 6 1 14 9 15 4-1 6-3 8-6-5 3-14 2-16-4-1-2-1-3-1-5z" fill="#0c52a0" />
    </svg>
  ) },
  { open: true, icon: (
    <svg viewBox="0 0 30 27" className="h-[27px] w-[30px]"><path d="M0 2C0 1 1 0 2 0h8l3 3v5H0z" fill="#e2a007" /><path d="M0 5h11l2-2h16l1 1v22H0z" fill="#fdcf49" /><path d="M5 26v-5c0-1 1-2 2-2h16c1 0 2 1 2 2v5z" fill="#1274c4" /><path d="M8 22.500h14" stroke="#0a4a86" strokeWidth="1.200" /></svg>
  ) },
  { icon: (
    <svg viewBox="0 0 30 30" className="h-[30px] w-[30px]">
      <defs><linearGradient id="asus" x1="0" y1="1" x2="1" y2="0"><stop stopColor="#6a1cff" /><stop offset=".5" stopColor="#2a5cf5" /><stop offset="1" stopColor="#00b4ff" /></linearGradient></defs>
      <rect width="30" height="30" fill="#0540c8" /><rect x="5" y="5" width="20" height="20" fill="url(#asus)" />
      <path d="M7.500 20l4.500-9M11 20l5-10M15 20l5-10v10M17 17h3" stroke="#fff" strokeWidth="1.700" fill="none" />
    </svg>
  ) },
  { icon: (
    <svg viewBox="0 0 30 30" className="h-[30px] w-[30px]"><rect width="30" height="30" rx="2" fill="#107c10" /><circle cx="15" cy="15" r="12.500" fill="#fff" /><path d="M5 5c5-1 8 2 10 3 2-1 5-4 10-3l-4 1c-2 1-3 2-4 4 4 4 8 9 7 15-2-6-6-10-9-13-3 3-7 7-9 13-1-6 3-11 7-15-1-2-2-3-4-4z" fill="#107c10" /></svg>
  ) },
  { icon: <Chrome /> },
  { open: true, icon: (
    <div className="relative h-[30px] w-[30px]">
      <svg viewBox="0 0 30 30" className="h-[30px] w-[30px]"><path d="M0 30l2-8A14.500 14.500 0 1 1 8 28z" fill="#fff" /><path d="M3 27l1.500-5.500A12 12 0 1 1 9 25.500z" fill="#27b43e" /><path d="M9 9c2-3 3-1 4 2 0 1-1 2-1 2 1 3 3 4 5 5l2-2c3 1 4 2 3 3-3 5-9 2-12-2-2-3-3-5-1-8z" fill="#fff" /></svg>
      <span className="absolute -top-[6px] left-[16px] flex h-[20px] w-[20px] items-center justify-center rounded-full bg-[#f60c0c] font-['Open_Sans',sans-serif] text-[16px] leading-none text-white">2</span>
    </div>
  ) },
  { open: true, icon: (
    <svg viewBox="0 0 30 30" className="h-[30px] w-[30px]"><rect width="30" height="30" rx="3" fill="#ef6c18" /><path d="M1 4h28" stroke="#b54c08" strokeWidth="1.500" /><path d="M7.500 9h4l7 13h4M7.500 22h4l7-13h4M7.500 9c-2 3-1 5 1 6.500-2 1.500-3 3.500-1 6.500M22.500 9c2 3 1 5-1 6.500 2 1.500 3 3.500 1 6.500" fill="none" stroke="#fff" strokeWidth="3.200" strokeLinejoin="round" /></svg>
  ) },
  { open: true, icon: <div className="relative"><Chrome /><Avatar kind="dark" className="-top-[7px] left-[15px] h-[20px] w-[20px]" /></div> },
  { open: true, icon: (
    <svg viewBox="0 0 30 30" className="h-[30px] w-[30px]"><path d="M21 0l9 4v22l-9 4z" fill="#a876f0" /><path d="M0 8l3-2 18 16v8L2 14z" fill="#5c3aa0" /><path d="M0 22l3 2L21 8V0L0 19z" fill="#8048c8" /><path d="M0 8l3-2v18l-3-2z" fill="#6b3fb0" /></svg>
  ) },
  { open: true, icon: <div className="relative"><Chrome /><Avatar kind="face" className="-top-[7px] left-[15px] h-[20px] w-[20px]" /><Avatar kind="face" className="top-[14px] left-[13px] h-[15px] w-[15px]" /></div> },
  { active: true, icon: (
    <svg viewBox="0 0 25 26" className="h-[26px] w-[25px]"><path d="M.5.500h24v25H.500z" fill="none" stroke="#c5cbc6" /><rect y="7" width="9" height="11" fill="#cf3a32" /><rect x="10" y="1" width="15" height="14" fill="#f0b41c" /><rect x="10" y="17" width="14" height="9" fill="#3f83ea" /></svg>
  ) },
];

function Taskbar() {
  return (
    <div className="absolute top-[1020px] left-0 flex h-[60px] w-[1920px] border-t border-[#98a39b] bg-[#a3ada3] pl-[576px] font-['Open_Sans',sans-serif] text-white">
      {apps.map((a, i) => (
        <div key={i} className="relative flex h-[58px] w-[55px] shrink-0 items-center justify-center">
          <div className={`flex h-[50px] w-[50px] items-center justify-center rounded-[5px] ${a.active ? "border border-[#adb6ae] bg-[#a8b2a8]" : ""}`}>{a.icon}</div>
          {a.open && <span className="absolute bottom-[5px] h-[4px] w-[8px] rounded-full bg-[#d3d8d4]" />}
          {a.active && <span className="absolute bottom-[5px] h-[4px] w-[18px] rounded-full bg-[#9ea89f]" />}
        </div>
      ))}
      <div className="ml-[256px] flex h-[58px] items-center">
        <svg viewBox="0 0 16 9" className="h-[9px] w-[16px] shrink-0"><path d="M.5 8.500L8 1l7.500 7.500" fill="none" stroke="#fff" strokeWidth="1.200" /></svg>
        <div className="ml-[21px] flex w-[29px] flex-col items-center text-[15px] leading-[20px]">
          <Fit w={29}>ENG</Fit>
          <Fit w={18}>US</Fit>
        </div>
        <svg viewBox="0 0 20 16" className="ml-[22px] h-[16px] w-[20px] shrink-0" fill="none" stroke="#fff" strokeWidth="1.400">
          <path d="M1 6c5-6 13-6 18 0M4 9c3-4 9-4 12 0M7 12c2-2 4-2 6 0" /><circle cx="10" cy="14" r="1.200" fill="#fff" />
        </svg>
        <svg viewBox="0 0 20 16" className="ml-[10px] h-[16px] w-[20px] shrink-0" fill="none" stroke="#fff" strokeWidth="1.300">
          <path d="M1 5.500h3L8.500 1v14L4 10.500H1zM11 5c2 2 2 4 0 6M13.500 3c3 3 3 7 0 10M16 1c4 4 4 10 0 14" />
        </svg>
        <svg viewBox="0 0 20 16" className="ml-[10px] h-[16px] w-[20px] shrink-0" fill="none" stroke="#fff" strokeWidth="1.500">
          <path d="M8 3h9v11H5v-4M19 6.500v4M2 0v4M6 0v4" /><path d="M0 4h8v3c0 3-8 3-8 0z" fill="#fff" stroke="none" /><path d="M9.500 6h5v6h-5z" fill="#fff" />
        </svg>
        <div className="ml-[18px] flex flex-col items-end text-[15px] leading-[20px]">
          <Fit w={36}>20:48</Fit>
          <Fit w={74}>13/01/2022</Fit>
        </div>
        <Fit w={7} className="ml-[20px] text-[14px] leading-[20px] text-black">1</Fit>
      </div>
    </div>
  );
}

export default function App() {
  return (
    <div className="relative h-[1080px] w-[1920px] overflow-hidden bg-[#58648f] font-['Liberation_Sans',sans-serif]">
      <div className="flex h-[1020px] flex-col">
        <div className="h-[110px] shrink-0 bg-[#c8d2ee]" />
        <div className="flex flex-1 flex-col items-end gap-[15px] bg-[#5a668f] pt-[8px]">
          <div className="h-[114px] w-[8px] bg-[#394a70]" />
          <div className="h-[78px] w-[8px] bg-[#394a70]" />
        </div>
        <div className="h-[31px] shrink-0 bg-[#a34b42]" />
      </div>
      <AdminWindow />
      <FormWindow />
      <ReportWindow />
      <Taskbar />
    </div>
  );
}
